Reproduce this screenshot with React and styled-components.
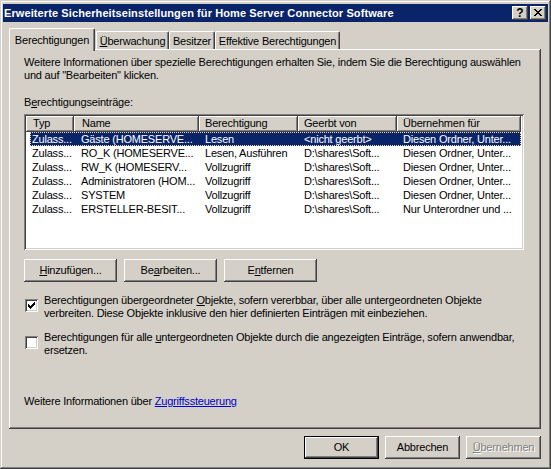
import React from 'react'
import styled, { createGlobalStyle, css } from 'styled-components'

const FACE = '#D4D0C8'
const LIGHT = '#FFFFFF'
const SHADOW = '#808080'
const DARK = '#404040'
const NAVY = '#0A246A'

const GlobalStyle = createGlobalStyle`
  html, body {
    margin: 0;
    padding: 0;
    background: ${FACE};
  }
  body {
    font-family: "Liberation Sans", Arial, sans-serif;
    font-size: 11px;
    letter-spacing: -0.2px;
    color: #000;
  }
`

const raised = css`
  box-shadow:
    inset -1px -1px ${DARK},
    inset 1px 1px ${LIGHT},
    inset -2px -2px ${SHADOW};
`

const Window = styled.div`
  width: 551px;
  height: 469px;
  box-sizing: border-box;
  padding: 4px 3px 3px 3px;
  display: flex;
  flex-direction: column;
  background: ${FACE};
  box-shadow:
    inset -1px -1px ${DARK},
    inset 1px 1px ${FACE},
    inset -2px -2px ${SHADOW},
    inset 2px 2px ${LIGHT};
`

const TitleBar = styled.div`
  height: 18px;
  flex: none;
  background: ${NAVY};
  color: #fff;
  display: flex;
  align-items: center;
  justify-content: space-between;
  padding: 0 2px 0 1px;
`

const TitleText = styled.span`
  font-weight: bold;
  font-size: 11px;
  letter-spacing: 0.1px;
  white-space: nowrap;
`

const CaptionButtons = styled.div`
  display: flex;
  gap: 2px;
`

const CaptionButton = styled.div`
  width: 16px;
  height: 14px;
  box-sizing: border-box;
  background: ${FACE};
  ${raised};
  display: flex;
  align-items: center;
  justify-content: center;
  font-weight: bold;
  font-size: 12px;
  letter-spacing: 0;
  color: #000;
  padding-bottom: 1px;
`

const Body = styled.div`
  flex: 1;
  display: flex;
  flex-direction: column;
  padding: 6px 7px 7px 6px;
`

const TabStrip = styled.div`
  height: 21px;
  flex: none;
  display: flex;
  align-items: flex-end;
  position: relative;
  z-index: 2;
`

const Tab = styled.div`
  width: ${p => p.w}px;
  height: ${p => (p.active ? 23 : 18)}px;
  margin-bottom: ${p => (p.active ? -2 : 0)}px;
  margin-right: ${p => (p.active ? 1 : 0)}px;
  box-sizing: border-box;
  padding-top: ${p => (p.active ? 5 : 3)}px;
  line-height: 13px;
  text-align: center;
  white-space: nowrap;
  background: ${FACE};
  border-top: 1px solid ${LIGHT};
  border-left: 1px solid ${LIGHT};
  border-right: 1px solid ${DARK};
  border-radius: 2px 2px 0 0;
  box-shadow: inset -1px 0 ${SHADOW};
`

const Panel = styled.div`
  flex: 1;
  box-sizing: border-box;
  padding: 7px 17px 0 15px;
  display: flex;
  flex-direction: column;
  background: ${FACE};
  box-shadow:
    inset -1px -1px ${DARK},
    inset 1px 1px ${LIGHT},
    inset -2px -2px ${SHADOW};
`

const Text = styled.div`
  line-height: 13px;
  white-space: nowrap;
  margin-top: ${p => p.mt || 0}px;
`

const ListView = styled.div`
  margin-top: 5px;
  height: 136px;
  box-sizing: border-box;
  padding: 2px;
  background: #fff;
  box-shadow:
    inset 1px 1px ${SHADOW},
    inset -1px -1px ${LIGHT},
    inset 2px 2px ${DARK},
    inset -2px -2px ${FACE};
  overflow: hidden;
`

const COLS = '48px 125px 99px 99px 124px'

const HeaderRow = styled.div`
  display: grid;
  grid-template-columns: ${COLS};
  height: 16px;
`

const HeaderCell = styled.div`
  background: ${FACE};
  ${raised};
  box-sizing: border-box;
  padding-left: ${p => p.pl || 6}px;
  line-height: 15px;
  white-space: nowrap;
  overflow: hidden;
`

const Row = styled.div`
  display: grid;
  grid-template-columns: 44px 125px 99px 99px 124px;
  margin-left: 4px;
  width: 491px;
  height: 14px;
  line-height: 14px;
  ${p =>
    p.selected &&
    css`
      background: ${NAVY};
      color: #fff;
      outline: 1px dotted #F5DB95;
      outline-offset: -1px;
    `}
`

const Cell = styled.div`
  padding-left: ${p => p.pl}px;
  white-space: nowrap;
  overflow: hidden;
`

const ButtonRow = styled.div`
  display: flex;
  gap: ${p => p.gap || 6}px;
  margin-top: ${p => p.mt || 0}px;
  justify-content: ${p => p.justify || 'flex-start'};
`

const Button = styled.div`
  width: ${p => p.w || 75}px;
  height: 23px;
  box-sizing: border-box;
  background: ${FACE};
  display: flex;
  align-items: center;
  justify-content: center;
  white-space: nowrap;
  padding-bottom: 1px;
  ${raised};
  ${p =>
    p.isDefault &&
    css`
      box-shadow:
        inset 0 0 0 1px #000,
        inset -2px -2px ${DARK},
        inset 2px 2px ${LIGHT},
        inset -3px -3px ${SHADOW};
    `}
  ${p =>
    p.disabled &&
    css`
      color: ${SHADOW};
      text-shadow: 1px 1px ${LIGHT};
    `}
`

const Mn = styled.span`
  text-decoration: underline;
`

const CheckRow = styled.div`
  display: flex;
  align-items: flex-start;
  gap: 6px;
  margin-top: ${p => p.mt || 0}px;
  padding-left: 1px;
`

const CheckBox = styled.div`
  width: 13px;
  height: 13px;
  flex: none;
  margin-top: 5px;
  box-sizing: border-box;
  background: #fff;
  box-shadow:
    inset 1px 1px ${SHADOW},
    inset -1px -1px ${LIGHT},
    inset 2px 2px ${DARK},
    inset -2px -2px ${FACE};
  display: flex;
  align-items: center;
  justify-content: center;
`

const Link = styled.span`
  color: #0000C8;
  text-decoration: underline;
`

const CheckMark = () => (
  <svg width="7" height="7" viewBox="0 0 7 7" shapeRendering="crispEdges">
    {[2, 3, 4, 3, 2, 1, 0].map((y, x) => (
      <rect key={x} x={x} y={y} width="1" height="3" fill="#000" />
    ))}
  </svg>
)

const CloseGlyph = () => (
  <svg width="8" height="7" viewBox="0 0 8 7" shapeRendering="crispEdges">
    {[
      [0, 6],
      [1, 5],
      [2, 4],
      [3, 3],
      [2, 4],
      [1, 5],
      [0, 6]
    ].map(([a, b], y) => (
      <g key={y} fill="#000">
        <rect x={a} y={y} width="2" height="1" />
        <rect x={b} y={y} width="2" height="1" />
      </g>
    ))}
  </svg>
)

const columns = [
  { label: 'Typ', pl: 7 },
  { label: 'Name', pl: 8 },
  { label: 'Berechtigung' },
  { label: 'Geerbt von' },
  { label: 'Übernehmen für' }
]

// text indent per column inside the rows
const cellPad = [2, 7, 6, 6, 6]

const entries = [
  ['Zulass...', 'Gäste (HOMESERVE...', 'Lesen', '<nicht geerbt>', 'Diesen Ordner, Unter...'],
  ['Zulass...', 'RO_K (HOMESERVE...', 'Lesen, Ausführen', 'D:\\shares\\Soft...', 'Diesen Ordner, Unter...'],
  ['Zulass...', 'RW_K (HOMESERV...', 'Vollzugriff', 'D:\\shares\\Soft...', 'Diesen Ordner, Unter...'],
  ['Zulass...', 'Administratoren (HOM...', 'Vollzugriff', 'D:\\shares\\Soft...', 'Diesen Ordner, Unter...'],
  ['Zulass...', 'SYSTEM', 'Vollzugriff', 'D:\\shares\\Soft...', 'Diesen Ordner, Unter...'],
  ['Zulass...', 'ERSTELLER-BESIT...', 'Vollzugriff', 'D:\\shares\\Soft...', 'Nur Unterordner und ...']
]

const tabs = [
  { label: 'Berechtigungen', w: 86, active: true },
  { label: <><Mn>Ü</Mn>berwachung</>, w: 73 },
  { label: 'Besitzer', w: 46 },
  { label: 'Effektive Berechtigungen', w: 125 }
]

const App = () => {
  return (
    <>
      <GlobalStyle />
      <Window>
        <TitleBar>
          <TitleText>Erweiterte Sicherheitseinstellungen für Home Server Connector Software</TitleText>
          <CaptionButtons>
            <CaptionButton>?</CaptionButton>
            <CaptionButton>
              <CloseGlyph />
            </CaptionButton>
          </CaptionButtons>
        </TitleBar>

        <Body>
          <TabStrip>
            {tabs.map((t, i) => (
              <Tab key={i} w={t.w} active={t.active}>
                {t.label}
              </Tab>
            ))}
          </TabStrip>

          <Panel>
            <Text>
              Weitere Informationen über spezielle Berechtigungen erhalten Sie, indem Sie die Berechtigung auswählen
              <br />
              und auf "Bearbeiten" klicken.
            </Text>
            <Text mt={14}>
              B<Mn>e</Mn>rechtigungseinträge:
            </Text>

            <ListView>
              <HeaderRow>
                {columns.map(c => (
                  <HeaderCell key={c.label} pl={c.pl}>
                    {c.label}
                  </HeaderCell>
                ))}
              </HeaderRow>
              {entries.map((row, i) => (
                <Row key={i} selected={i === 0}>
                  {row.map((v, j) => (
                    <Cell key={j} pl={cellPad[j]}>
                      {v}
                    </Cell>
                  ))}
                </Row>
              ))}
            </ListView>

            <ButtonRow mt={9} gap={7}>
              <Button w={93}>
                <Mn>H</Mn>inzufügen...
              </Button>
              <Button w={93}>
                Be<Mn>a</Mn>rbeiten...
              </Button>
              <Button w={93}>
                E<Mn>n</Mn>tfernen
              </Button>
            </ButtonRow>

            <CheckRow mt={12}>
              <CheckBox>
                <CheckMark />
              </CheckBox>
              <Text>
                Berechtigungen übergeordneter <Mn>O</Mn>bjekte, sofern vererbbar, über alle untergeordneten Objekte
                <br />
                verbreiten. Diese Objekte inklusive den hier definierten Einträgen mit einbeziehen.
              </Text>
            </CheckRow>

            <CheckRow mt={11}>
              <CheckBox />
              <Text>
                Berechtigungen für alle <Mn>u</Mn>ntergeordneten Objekte durch die angezeigten Einträge, sofern anwendbar,
                <br />
                ersetzen.
              </Text>
            </CheckRow>

            <Text mt={38}>
              Weitere Informationen über <Link>Zugriffssteuerung</Link>
            </Text>
          </Panel>

          <ButtonRow mt={7} justify="flex-end" gap={6}>
            <Button isDefault>OK</Button>
            <Button>Abbrechen</Button>
            <Button disabled>
              <Mn>Ü</Mn>bernehmen
            </Button>
          </ButtonRow>
        </Body>
      </Window>
    </>
  )
}

export default App
